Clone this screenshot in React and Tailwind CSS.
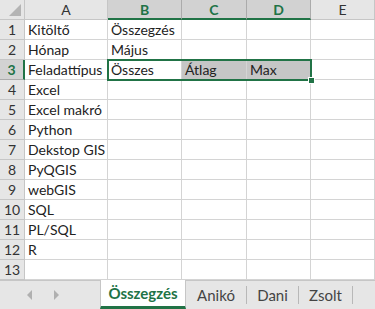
import React from 'react';

const cols = ['A', 'B', 'C', 'D', 'E'];
const selCols = ['B', 'C', 'D'];

const rows = [
    ['Kitöltő', 'Összegzés', '', '', ''],
    ['Hónap', 'Május', '', '', ''],
    ['Feladattípus', 'Összes', 'Átlag', 'Max', ''],
    ['Excel', '', '', '', ''],
    ['Excel makró', '', '', '', ''],
    ['Python', '', '', '', ''],
    ['Dekstop GIS', '', '', '', ''],
    ['PyQGIS', '', '', '', ''],
    ['webGIS', '', '', '', ''],
    ['SQL', '', '', '', ''],
    ['PL/SQL', '', '', '', ''],
    ['R', '', '', '', ''],
    ['', '', '', '', ''],
];

const App = () => {
    return (
        <div className="w-[375px] h-[309px] overflow-hidden bg-white text-[14px] text-[#222]" style={{ fontFamily: 'Lato, "Open Sans", sans-serif' }}>
            <div className="relative grid grid-cols-[25px_83px_74px_65px_64px_64px] grid-rows-[20px_repeat(13,20px)]">
                {/* corner */}
                <div className="relative bg-[#e6e6e6] border-r border-b border-[#c6c6c6]">
                    <div className="absolute right-[3px] bottom-[3px] w-0 h-0 border-l-[12px] border-l-transparent border-b-[12px] border-b-[#b4b4b4]" />
                </div>
                {cols.map(c => {
                    const sel = selCols.includes(c);
                    return (
                        <div key={c} className={sel
                            ? "flex items-center justify-center bg-[#d2d2d2] border-r border-[#ababab] border-b-2 border-b-[#217346] text-[#217346] font-bold"
                            : "flex items-center justify-center bg-[#e6e6e6] border-r border-b border-[#c6c6c6] text-[#333]"}>
                            {c}
                        </div>
                    );
                })}
                {rows.map((r, i) => (
                    <React.Fragment key={i}>
                        <div className={i === 2
                            ? "flex items-center justify-center bg-[#d2d2d2] border-r-2 border-r-[#217346] border-b border-b-[#ababab] text-[#217346] font-bold"
                            : "flex items-center justify-center bg-[#e6e6e6] border-r border-b border-[#c6c6c6] text-[#333]"}>
                            {i + 1}
                        </div>
                        {r.map((v, j) => (
                            <div key={j} className={(i === 2 && (j === 2 || j === 3) ? "bg-[#c6c6c6] " : "") + "flex items-center pl-[3px] pt-px border-r border-b border-[#d4d4d4] whitespace-nowrap overflow-visible leading-none"}>
                                {v}
                            </div>
                        ))}
                    </React.Fragment>
                ))}
                {/* selection overlay */}
                <div className="absolute left-[107px] top-[59px] w-[205px] h-[22px] border-2 border-[#217346] pointer-events-none">
                    <div className="absolute right-[-5px] bottom-[-5px] w-[7px] h-[7px] bg-[#217346] border border-white" />
                </div>
            </div>
            {/* sheet tabs */}
            <div className="flex h-[29px] bg-[#e6e6e6] border-t border-[#c6c6c6]">
                <div className="flex items-center w-[100px] pl-[27px] gap-[22px]">
                    <div className="w-0 h-0 border-y-[5px] border-y-transparent border-r-[5px] border-r-[#b0b0b0]" />
                    <div className="w-0 h-0 border-y-[5px] border-y-transparent border-l-[5px] border-l-[#b0b0b0]" />
                </div>
                <div className="flex items-center justify-center w-[86px] -mt-px bg-white border-x border-[#c6c6c6] border-b-[3px] border-b-[#217346] text-[#217346] font-bold text-[15px]">
                    Összegzés
                </div>
                <div className="flex items-center justify-center w-[61px] text-[#444] border-r border-[#b8b8b8] my-[5px] text-[15px]">Anikó</div>
                <div className="flex items-center justify-center w-[52px] text-[#444] border-r border-[#b8b8b8] my-[5px] text-[15px]">Dani</div>
                <div className="flex items-center justify-center w-[54px] text-[#444] border-r border-[#b8b8b8] my-[5px] text-[15px]">Zsolt</div>
            </div>
        </div>
    );
};

export default App;
